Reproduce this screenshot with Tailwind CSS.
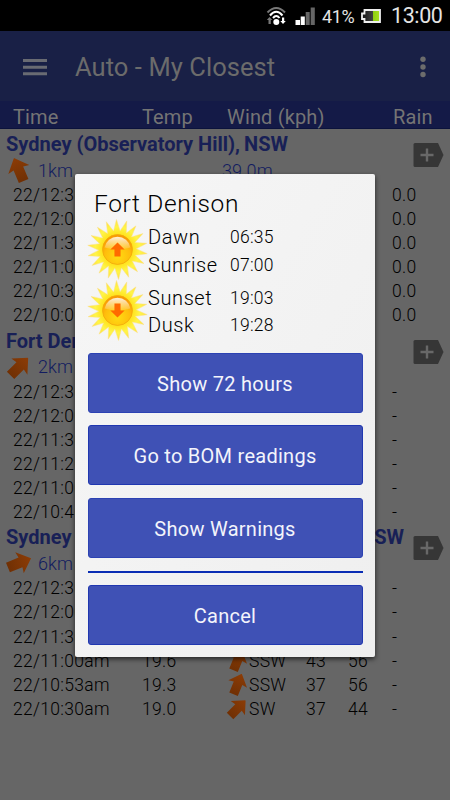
<!DOCTYPE html>
<html lang="en">
<head>
<meta charset="utf-8">
<title>Auto - My Closest</title>
<script src="https://cdn.jsdelivr.net/npm/@tailwindcss/browser@4"></script>
</head>
<body class="relative h-[800px] w-[450px] overflow-hidden bg-[#666] font-['Roboto',sans-serif]">
<svg class="absolute size-0">
  <defs>
    <linearGradient id="arrowFill" x1="0" y1="0" x2="0" y2="1"><stop offset="0" stop-color="#8c3c06"/><stop offset="1" stop-color="#703004"/></linearGradient>
    <radialGradient id="rays"><stop offset=".5" stop-color="#ffe21c"/><stop offset=".75" stop-color="#fff548"/><stop offset="1" stop-color="#ffe040"/></radialGradient>
    <radialGradient id="disc" cx=".5" cy=".72" r=".65"><stop offset="0" stop-color="#ffdc12"/><stop offset=".65" stop-color="#ffbd0c"/><stop offset="1" stop-color="#f99a04"/></radialGradient>
    <linearGradient id="shine" x1="0" y1="0" x2="0" y2="1"><stop offset="0" stop-color="#fff" stop-opacity=".85"/><stop offset="1" stop-color="#fff" stop-opacity=".1"/></linearGradient>
    <linearGradient id="battery"><stop offset="0" stop-color="#111"/><stop offset=".62" stop-color="#444"/><stop offset=".63" stop-color="#8fcf10"/><stop offset="1" stop-color="#a8e020"/></linearGradient>
    <symbol id="arrow" viewBox="-12 -12 24 24"><path d="M0-12 10.500-.5 4.800-1.500 4.800 11-4.800 11-4.800-1.500-10.500-.5Z" fill="url(#arrowFill)"/></symbol>
    <symbol id="sun" viewBox="-30 -30 60 60">
      <polygon data-rays fill="url(#rays)" stroke="#fbe28a" stroke-width=".5"/>
      <circle r="14.700" fill="url(#disc)" stroke="#f2a90c" stroke-width=".8"/>
      <path d="M-12.700-2A12.900 12.900 0 0 1 12.700-2Q0 2-12.700-2Z" fill="url(#shine)"/>
    </symbol>
  </defs>
</svg>

<header>
  <div class="flex h-[31px] items-center bg-black pl-[266px] text-[#e4e4e4]">
    <svg class="h-[20px] w-[21px]" viewBox="0 0 21 20" fill="none">
      <path d="M1.500 6.500Q10.300-2.500 19 6.500" stroke="#777" stroke-width="2"/>
      <path d="M4 9.500Q10.300 2 16.500 9.500M7 12Q10.300 8 13.500 12" stroke="#fff" stroke-width="2"/>
      <circle cx="10.300" cy="16" r="3" fill="#fff"/>
      <path d="M3.500 11 .8 14H2.500V18H4.800V14H6.300Z" fill="#777"/><path d="M17 18 14.300 15H16V11.500H18.200V15H19.800Z" fill="#fff"/>
    </svg>
    <svg class="ml-[8px] h-[18px] w-[20px]" viewBox="0 0 20 18"><path d="M.5 13H5V18H.5ZM5.700 9.500H9.800V18H5.700Z" fill="#fff"/><path d="M10.700 5H14.700V18H10.700ZM15.700.5H19.800V18H15.700Z" fill="#666"/></svg>
    <span class="ml-[7px] w-[33px] pt-[2px] whitespace-nowrap text-[18px] tracking-[-0.4px]">41%</span>
    <svg class="ml-[6px] h-[14px] w-[20px]" viewBox="0 0 20 14"><path d="M3.500 1H19V13H3.500V10H1V4.500H3.500Z" fill="url(#battery)" stroke="#eee" stroke-width="1.800"/></svg>
    <span class="ml-[10px] pt-[2px] whitespace-nowrap text-[21.500px] tracking-[-0.4px]">13:00</span>
  </div>
  <div class="flex h-[70px] items-center bg-[#192046] pt-[1px] pl-[23px]">
    <svg class="h-[18px] w-[24px]" viewBox="0 0 24 18" fill="#696b73"><path d="M0 1H24V4H0ZM0 7.700H24V10.700H0ZM0 14.300H24V17.300H0Z"/></svg>
    <h1 class="ml-[28px] pt-[1px] whitespace-nowrap text-[25.500px] leading-[32px] tracking-[0.07px] text-[#6b6b6b]">Auto - My Closest</h1>
    <svg class="mr-[24px] ml-auto h-[22px] w-[6px]" viewBox="0 0 6 22" fill="#6c6c6c"><circle cx="3" cy="3.200" r="2.700"/><circle cx="3" cy="11" r="2.700"/><circle cx="3" cy="18.500" r="2.700"/></svg>
  </div>
  <div class="flex h-[28px] items-center border-b border-[#0b123c] bg-[#141a47] pt-[4px] pl-[13px] text-[20px] tracking-[0.15px] whitespace-nowrap text-[#747474]">
    <span class="w-[129px]">Time</span><span class="w-[85px]">Temp</span><span class="w-[166px]">Wind (kph)</span><span>Rain</span>
  </div>
</header>

<main id="stations" class="pt-[2px]"></main>

<section class="absolute top-[174px] left-[75px] h-[483px] w-[300px] rounded-[2px] bg-linear-to-br from-[#f6f6f6] to-[#efefef] px-[13px] shadow-[0_2px_5px_rgba(0,0,0,0.65)]">
  <h2 class="pt-[14px] pl-[6px] text-[24.500px] leading-[32px] font-light tracking-[0.65px] text-black">Fort Denison</h2>
  <div class="flex h-[61px] items-center text-[20px] leading-[27.500px] font-light text-black">
    <svg class="-mt-[2px] -ml-[1px] size-[61px] shrink-0" viewBox="-30 -30 60 60"><use href="#sun" x="-30" y="-30" width="60" height="60"/><path d="M0-7 7 0H3V7H-3V0H-7Z" fill="#ff6a00"/></svg>
    <div class="w-[82px] pt-[2px] tracking-[0.6px]"><p>Dawn</p><p>Sunrise</p></div>
    <div class="pt-[2px] text-[17.500px] tracking-[0.25px]"><p>06:35</p><p>07:00</p></div>
  </div>
  <div class="flex h-[60px] items-center text-[20px] leading-[27.500px] font-light text-black">
    <svg class="-mt-[2px] -ml-[1px] size-[61px] shrink-0" viewBox="-30 -30 60 60"><use href="#sun" x="-30" y="-30" width="60" height="60"/><path d="M0 7 7 0H3V-7H-3V0H-7Z" fill="#ff6a00"/></svg>
    <div class="w-[82px] pt-[2px] tracking-[0.6px]"><p>Sunset</p><p>Dusk</p></div>
    <div class="pt-[2px] text-[17.500px] tracking-[0.25px]"><p>19:03</p><p>19:28</p></div>
  </div>
  <div class="mt-[11.500px] -ml-[0.500px] flex flex-col gap-[12.700px] text-[20px] tracking-[0.27px] text-[#f3f4fb]">
    <button class="h-[60px] w-[275px] rounded-[3px] border border-[#2c42b3] bg-[#3f51b5] pt-[2px]">Show 72 hours</button>
    <button class="h-[60px] w-[275px] rounded-[3px] border border-[#2037b0] bg-[#3f51b5] pt-[2px]">Go to BOM readings</button>
    <button class="h-[60px] w-[275px] rounded-[3px] border border-[#2c42b3] bg-[#3f51b5] pt-[2px]">Show Warnings</button>
    <hr class="h-[2px] w-[275px] border-0 bg-[#0a2db4]">
    <button class="h-[60px] w-[275px] rounded-[3px] border border-[#2037b0] bg-[#3f51b5] pt-[2px]">Cancel</button>
  </div>
</section>

<script>
const pts = [];
for (let i = 0; i < 36; i++) {
  const a = (i * 10 - 92) * Math.PI / 180, r = i % 2 ? 18.5 : 29.5;
  pts.push((Math.cos(a) * r).toFixed(2) + ',' + (Math.sin(a) * r).toFixed(2));
}
document.querySelector('[data-rays]').setAttribute('points', pts.join(' '));

const stations = [
  { name: 'Sydney (Observatory Hill),', state: 'NSW', far: false, km: '1km', alt: '39.0m', turn: -23, rain: '0.0',
    rows: [['22/12:30pm','20.1','SSW',37,50,22],['22/12:00pm','20.0','SSW',37,50,22],['22/11:30am','19.8','SSW',37,50,22],['22/11:00am','19.6','SSW',37,50,22],['22/10:30am','19.2','SW',37,50,45],['22/10:00am','19.0','SW',37,50,45]] },
  { name: 'Fort Denison,', state: 'NSW', far: false, km: '2km', alt: '', turn: 45, rain: '-',
    rows: [['22/12:30pm','20.1','SSW',37,50,22],['22/12:00pm','20.0','SSW',37,50,22],['22/11:30am','19.8','SSW',37,50,22],['22/11:20am','19.6','SSW',37,50,22],['22/11:00am','19.2','SW',37,50,45],['22/10:40am','19.0','SW',37,50,45]] },
  { name: 'Sydney Harbour', state: 'NSW', far: true, km: '6km', alt: '', turn: 68, rain: '-',
    rows: [['22/12:30pm','20.1','SSW',37,50,22],['22/12:00pm','20.0','SSW',37,50,22],['22/11:30am','19.8','SSW',43,56,22],['22/11:00am','19.6','SSW',43,56,22],['22/10:53am','19.3','SSW',37,56,22],['22/10:30am','19.0','SW',37,44,45]] }
];
const arrow = (turn, cls) => `<svg class="${cls}" viewBox="0 0 24 24"><use href="#arrow" width="24" height="24" transform="rotate(${turn} 12 12)"/></svg>`;
document.getElementById('stations').innerHTML = stations.map(s => `
<section class="relative h-[196.700px]">
  <div class="flex h-[26px] w-[404px] items-center pl-[6px] text-[20px] font-bold tracking-[0px] whitespace-nowrap text-[#182056] ${s.far ? 'justify-between' : 'gap-[4px]'}"><span>${s.name}</span><span>${s.state}</span></div>
  <div class="flex h-[26px] items-center pl-[6px] text-[18px] font-light tracking-[0.1px] text-[#121c60]">${arrow(s.turn, 'size-[26px]')}<span class="ml-[6px] w-[184px]">${s.km}</span><span>${s.alt}</span></div>
  <svg class="absolute top-[11px] right-[6px] h-[26px] w-[31px]" viewBox="0 0 31 26"><path d="M2 1H25L30.500 13 25 25H2Q.5 25 .5 23.500V2.500Q.5 1 2 1Z" fill="#363636"/><path d="M14 6.500V19.500M7.500 13H20.500" stroke="#686868" stroke-width="2.400"/></svg>
  ${s.rows.map(r => `<div class="flex h-[24.120px] items-center pl-[13px] text-[17.500px] font-light tracking-[0.3px] whitespace-nowrap text-black">
    <span class="w-[129px]">${r[0]}</span><span class="w-[84px]">${r[1]}</span>${arrow(r[5], 'size-[23px]')}<span class="w-[57px]">${r[2]}</span><span class="w-[42px]">${r[3]}</span><span class="w-[44px]">${r[4]}</span><span>${s.rain}</span></div>`).join('')}
</section>`).join('');
</script>
</body>
</html>
